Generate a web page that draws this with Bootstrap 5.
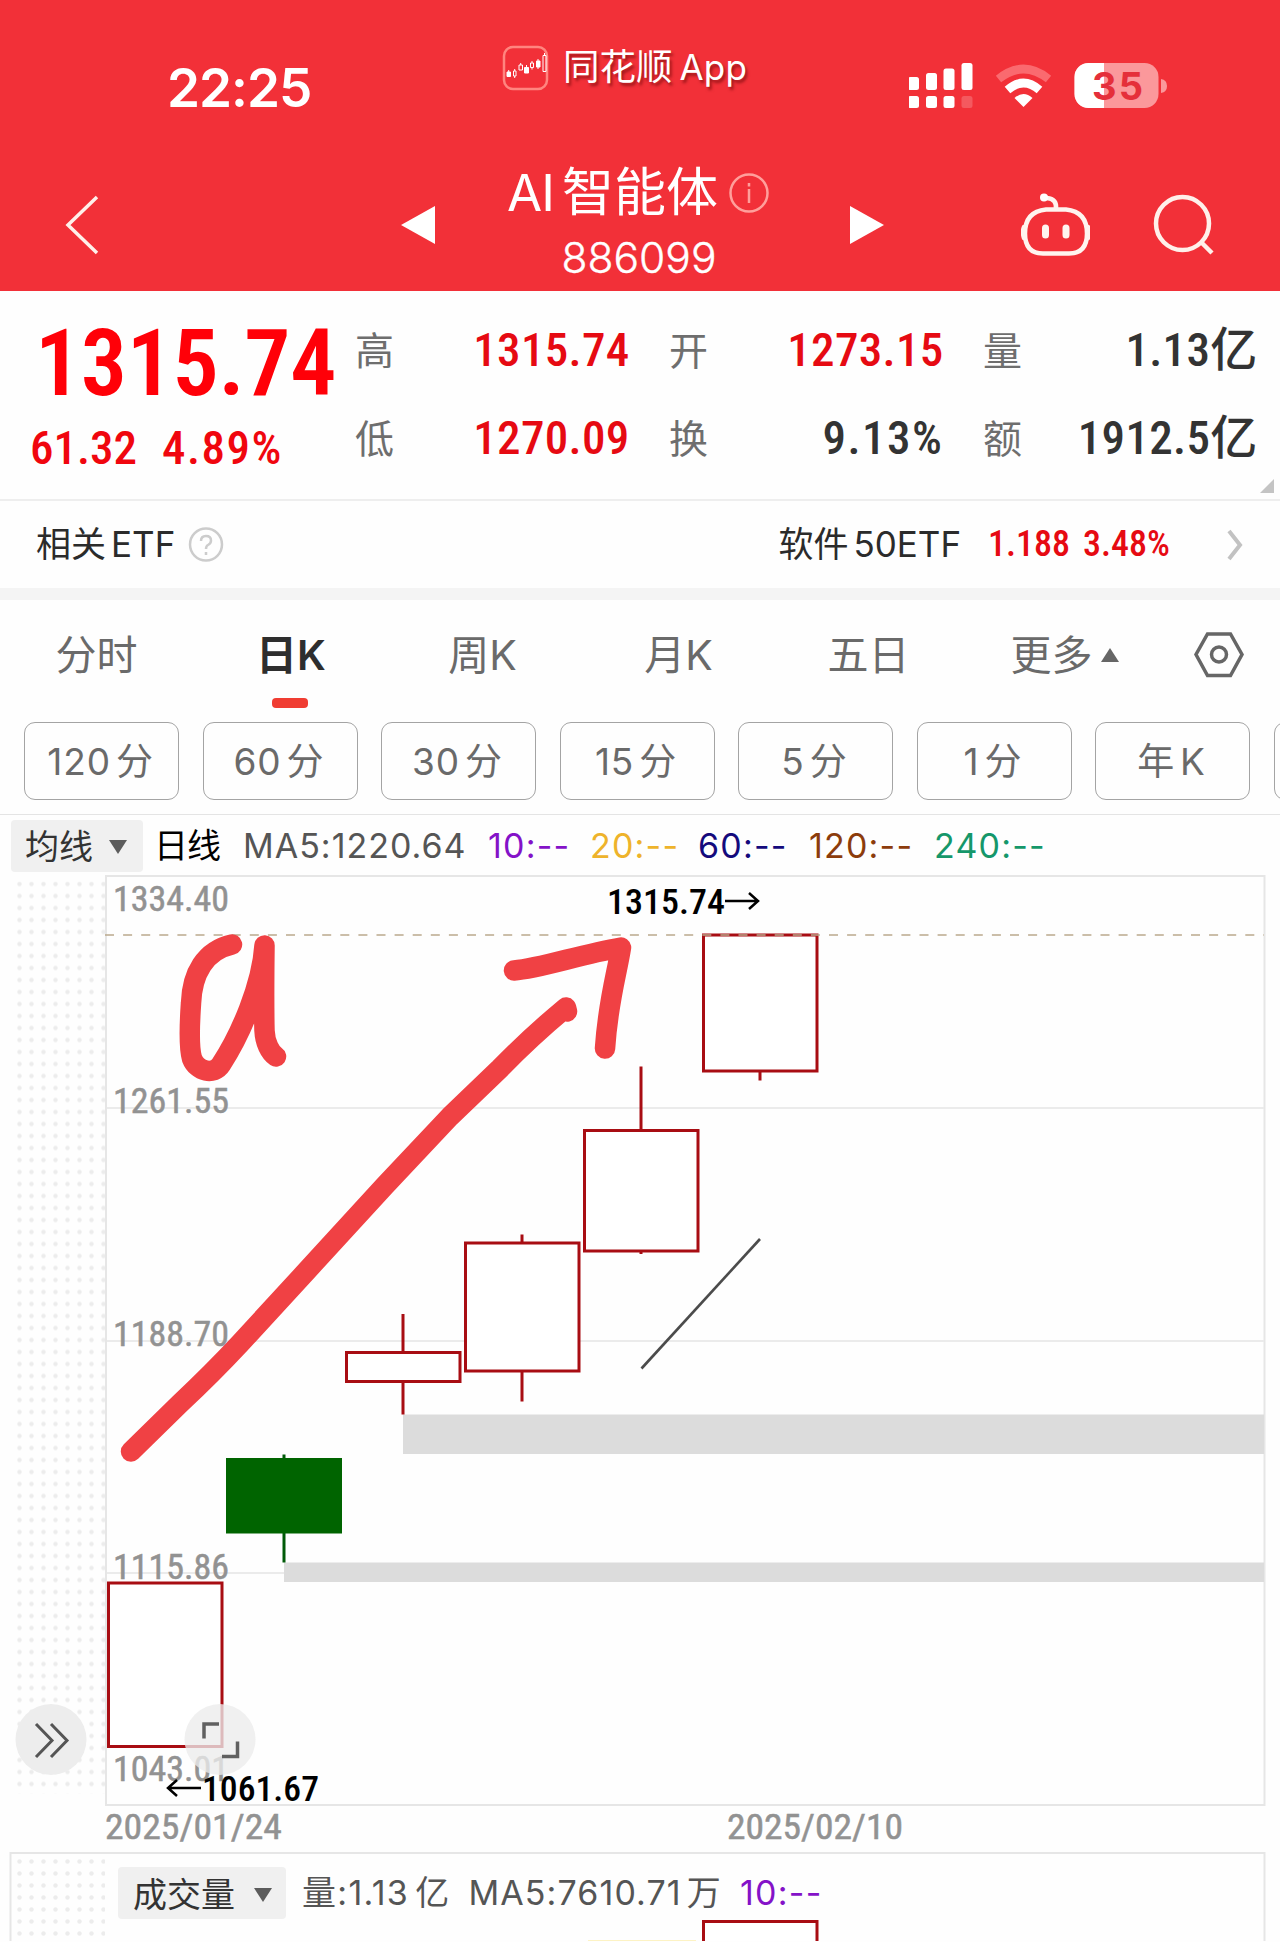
<!DOCTYPE html>
<html lang="zh-CN">
<head>
<meta charset="utf-8">
<meta name="viewport" content="width=device-width, initial-scale=1">
<title>AI智能体 886099</title>
<link href="https://cdn.jsdelivr.net/npm/bootstrap@5.3.0/dist/css/bootstrap.min.css" rel="stylesheet">
<style>
body{width:1280px;height:1942px;overflow:hidden;background:#fefefe;font-family:Inter,"Noto Sans CJK SC",sans-serif;color:#333;line-height:1;white-space:nowrap}
svg{display:block;flex-shrink:0}
.din{font-family:"Roboto Condensed",Roboto,"Noto Sans CJK SC",sans-serif;font-stretch:75%}
.up{color:#e60a12}
.cj{margin-left:5px}
.topbar{height:291px;background:#f23038;color:#fff}
.status-row{height:134px;display:grid;grid-template-columns:500px 409px 1fr}
.clock{font-size:53px;font-weight:600;letter-spacing:-1px;padding:42px 0 0 167px}
.brand{font-size:36.5px;text-shadow:2px 3px 3px rgba(90,0,0,.55);gap:14px;padding-left:2px;padding-top:1px}
.brand .latin{margin-left:7px;font-size:35px;letter-spacing:.2px}
.nav-row{height:157px;padding-top:24px;display:grid;grid-template-columns:401px 34px 415px 34px 137px 69px 1fr}
.title-line{height:68px;font-size:52px;gap:11px;padding-right:9px}
.title-line .latin{font-weight:400;font-size:51px;letter-spacing:-1px;margin-right:8px}
.code-line{height:64px;font-size:42.5px;font-weight:300;padding-right:7px;-webkit-text-stroke:.4px #fff}
.quote{height:210px;border-bottom:2px solid #eee;position:relative}
.price-col{width:355px;padding-left:30px}
.price{font-size:92px;font-weight:600;color:#ff0008;line-height:92px;margin:27px 0 0 5px;letter-spacing:-.4px}
.change{font-size:47px;font-weight:500;line-height:60px;margin-top:8px;color:#f0060e}
.stats{display:grid;grid-template-columns:repeat(3,274.500px);column-gap:39.5px;grid-template-rows:88px 88px;padding-top:14px;height:190px}
.stat-name{font-size:39px;color:#6e6e6e;padding-top:3px}
.stat-value{font-size:47px;font-weight:500;letter-spacing:.3px}
.pct{letter-spacing:1.5px}
.corner{right:6px;bottom:6px}
.etf{height:87px;padding:0 36px 0 36px;font-size:35px;color:#2b2b2b}
.etf-quote{font-size:36px;font-weight:500;padding-bottom:1px}
.band{height:12px;background:#f4f4f4}
.tabs{height:110px;display:grid;grid-template-columns:193px 196px 187px 205px 175px 217px 92px;font-size:41px;color:#6a6a6a}
.tab-on{color:#2e2e2e;font-weight:600}
.tab-on::after{content:"";position:absolute;left:79px;bottom:2px;width:36px;height:10px;border-radius:4px;background:#f03d32}
.periods{height:105px;padding:12px 0 0 24px;gap:23.5px;border-bottom:1px solid #e4e4e4}
.btn-period{width:155px;height:78px;flex-shrink:0;border:1.5px solid #a4a4a4;border-radius:11px;color:#6a6a6a;font-size:37px;padding:0 2px 0 0;line-height:78px;letter-spacing:.9px}
.ma-row{height:58px;padding:3px 0 0 11px;display:grid;grid-template-columns:143px 89px 245px 102px 108px 111px 125px 1fr;font-size:34px;letter-spacing:1.2px}
.chip{background:#f0f0f0;border-radius:4px;height:52px;font-size:34px;color:#333;letter-spacing:0;padding-top:3px}
.chart text{font-family:"Roboto Condensed",Roboto,sans-serif;font-stretch:75%;font-size:35px}
.axis{fill:#929292;font-weight:400}
.peak{fill:#000;font-weight:500}
.candle{fill:#fff;stroke:#a80d13;stroke-width:3}
.wick{stroke:#a80d13;stroke-width:3;fill:none}
.volume{height:92px;position:relative}
.volume-head{position:relative;height:88px;padding-left:118px;font-size:34px;color:#555;letter-spacing:1.3px}
</style>
</head>
<body>
<header class="topbar">
  <div class="status-row">
    <div class="clock d-flex align-items-center">22:25</div>
    <div class="brand d-flex align-items-center">
      <svg width="47" height="46" viewBox="0 0 47 46"><rect x="2" y="2" width="43" height="42" rx="9" fill="none" stroke="#ff857f" stroke-width="2.500"/><g fill="#fff" stroke="#fff" stroke-width="1"><path d="M5 27h3.500v4.500H5zM22.500 22.500h4v5.500h-4zM34.500 16h3.500v6h-3.500z"/><path fill="none" d="M11.500 26h2.500v5h-2.500zM17 20h3.500v5H17zM28.500 18h3v4.500h-3zM41 10.500h3v16h-3zM12.700 24v2M12.700 31v2M18.700 18v2M24.500 20v2M30 16v2M30 22.500v2M36 14v10M42.500 8v2M6.700 25v7"/></g></svg>
      <span>同花顺<span class="latin">App</span></span>
    </div>
    <svg width="270" height="134" viewBox="910 0 270 134">
      <g fill="#fff"><rect x="909" y="77" width="11" height="13" rx="2.500"/><rect x="927" y="73" width="11" height="17" rx="2.500"/><rect x="944.500" y="68.500" width="11" height="21.500" rx="2.500"/><rect x="962.500" y="63" width="11" height="27" rx="2.500"/><rect x="909" y="96" width="11" height="12" rx="2.500"/><rect x="927" y="96" width="11" height="12" rx="2.500"/><rect x="944.500" y="96" width="11" height="12" rx="2.500"/><rect x="962.500" y="96" width="11" height="12" rx="2.500" opacity=".2"/></g>
      <path d="M999.500 79Q1024.500 59 1049.500 79" fill="none" stroke="#fa6a6f" stroke-width="8.500"/>
      <path d="M1008.500 90Q1024.500 76 1040.500 90" fill="none" stroke="#fff" stroke-width="8.500"/>
      <path d="M1015.500 98Q1024.500 90 1033.500 98L1024.500 107Z" fill="#fff"/>
      <rect x="1075.500" y="63" width="84" height="45" rx="14" fill="#fb989b"/>
      <path d="M1105 63h-15.500a14 14 0 0 0-14 14v17a14 14 0 0 0 14 14h15.500z" fill="#fff"/>
      <path d="M1162 79q6 1 6 7t-6 7z" fill="#fb989b"/>
      <text x="1118.500" y="100" text-anchor="middle" font-size="38" font-weight="700" textLength="51" fill="#e52f3a">35</text>
    </svg>
  </div>
  <div class="nav-row align-items-center">
    <svg width="110" height="66" viewBox="0 0 110 66"><path d="M97 5 68 33 97 61" fill="none" stroke="#fff0ea" stroke-width="3.500"/></svg>
    <svg width="34" height="38"><path d="M34 0v38L0 19z" fill="#fff"/></svg>
    <div class="text-center">
      <div class="title-line d-flex align-items-center justify-content-center"><span><span class="latin">AI</span>智能体</span>
        <svg width="40" height="40" viewBox="0 0 40 40" fill="none" stroke="#ff9f9b" stroke-width="2.500"><circle cx="20" cy="20" r="18.500"/><path d="M20 16v14M20 10v3.500"/></svg></div>
      <div class="code-line d-flex align-items-center justify-content-center">886099</div>
    </div>
    <svg width="34" height="38"><path d="M0 0v38l34-19z" fill="#fff"/></svg>
    <span></span>
    <svg width="69" height="66" viewBox="1022 191 69 66" fill="none" stroke="#fff4ef" stroke-width="4.500"><path d="M1047 208.500h20q21 2 21 24 0 20-18 20h-26q-18 0-18-20 0-22 21-24zM1057 208q1-10-9-11" stroke-linecap="round"/><circle cx="1045" cy="196.500" r="4" fill="#fff" stroke="none"/><path d="M1046.500 227v7M1067 227v7" stroke-width="7" stroke-linecap="round"/><path d="M1025 226q-2 5 0 11M1089 226q2 5 0 11" stroke-width="4.500" stroke-linecap="round"/></svg>
    <svg width="130" height="66" viewBox="1091 191 130 66" fill="none" stroke="#fff0ea" stroke-width="4.500"><circle cx="1183.500" cy="222.500" r="26.500"/><path d="m1202 241 11 11"/></svg>
  </div>
</header>

<section class="quote d-flex">
  <div class="price-col din">
    <div class="price">1315.74</div>
    <div class="change d-flex"><span style="width:132px">61.32</span><span class="pct">4.89%</span></div>
  </div>
  <div class="stats">
    <div class="d-flex justify-content-between align-items-center"><span class="stat-name">高</span><span class="stat-value din up">1315.74</span></div>
    <div class="d-flex justify-content-between align-items-center"><span class="stat-name">开</span><span class="stat-value din up">1273.15</span></div>
    <div class="d-flex justify-content-between align-items-center"><span class="stat-name">量</span><span class="stat-value din">1.13亿</span></div>
    <div class="d-flex justify-content-between align-items-center"><span class="stat-name">低</span><span class="stat-value din up">1270.09</span></div>
    <div class="d-flex justify-content-between align-items-center"><span class="stat-name">换</span><span class="stat-value din pct">9.13%</span></div>
    <div class="d-flex justify-content-between align-items-center"><span class="stat-name">额</span><span class="stat-value din">1912.5亿</span></div>
  </div>
  <svg class="corner position-absolute" width="14" height="14"><path d="M14 0v14H0z" fill="#c4c4c4"/></svg>
</section>

<section class="etf d-flex align-items-center">
  <span>相关<span class="cj">ETF</span></span>
  <svg style="margin-left:13px" width="36" height="36" viewBox="0 0 36 36" fill="none" stroke="#ccc" stroke-width="2.500"><circle cx="18" cy="17.500" r="16"/><path d="M13 14q0-5 5-5t5 4.500q0 3-3 4.500-2 1-2 4M18 25v3"/></svg>
  <span class="ms-auto">软件<span class="cj">50ETF</span></span>
  <span class="din up d-flex etf-quote"><span style="margin:0 13px 0 27px">1.188</span><span>3.48%</span></span>
  <svg style="margin-left:57px" width="17" height="32" viewBox="0 0 17 32"><path d="M2 2 13 16 2 30" fill="none" stroke="#c2c2c2" stroke-width="4"/></svg>
</section>
<div class="band"></div>

<nav class="tabs text-center align-items-center">
  <span>分时</span>
  <span class="tab-on position-relative h-100 d-flex align-items-center justify-content-center">日K</span>
  <span>周K</span><span>月K</span><span>五日</span>
  <span class="d-flex align-items-center justify-content-center">更多<svg class="ms-2" width="18" height="14"><path d="M9 0 18 14H0z" fill="#666"/></svg></span>
  <svg class="mx-auto" width="50" height="46" viewBox="0 0 50 46" fill="none" stroke="#666" stroke-width="3.500"><path d="M13.500 2h23L48 22.500 36.500 43.500h-23L2 22.500z"/><circle cx="25" cy="22.500" r="7.500"/></svg>
</nav>

<div class="periods d-flex overflow-hidden">
  <button class="btn btn-period">120<span class="cj">分</span></button>
  <button class="btn btn-period">60<span class="cj">分</span></button>
  <button class="btn btn-period">30<span class="cj">分</span></button>
  <button class="btn btn-period">15<span class="cj">分</span></button>
  <button class="btn btn-period">5<span class="cj">分</span></button>
  <button class="btn btn-period">1<span class="cj">分</span></button>
  <button class="btn btn-period">年<span class="cj">K</span></button>
  <button class="btn btn-period"></button>
</div>

<div class="ma-row align-items-center">
  <div><div class="chip d-flex align-items-center" style="width:132px;padding-left:14px">均线<svg style="margin-left:16px" width="18" height="14"><path d="M0 0h18L9 14z" fill="#5c5c5c"/></svg></div></div>
  <span class="text-black" style="letter-spacing:-1px">日线</span>
  <span style="color:#555;letter-spacing:1px">MA5:1220.64</span>
  <span style="color:#8412c8">10:--</span>
  <span style="color:#eeb32b">20:--</span>
  <span style="color:#140a7c">60:--</span>
  <span style="color:#8c3c0c">120:--</span>
  <span style="color:#15976a">240:--</span>
</div>

<svg class="chart" width="1280" height="976" viewBox="0 873.500 1280 976">
  <defs><pattern id="dots" x="17" y="882" width="12" height="12" patternUnits="userSpaceOnUse"><circle cx="2.500" cy="2.500" r="2.200" fill="#ececec"/></pattern></defs>
  <rect x="17" y="882" width="88" height="912" fill="url(#dots)"/>
  <rect x="106" y="876.500" width="1158.500" height="929" fill="#fefefe" stroke="#e6e6e6" stroke-width="2"/>
  <path d="M107 1108.500H1264M107 1341.500H1264M107 1573.500H1264" stroke="#ebebeb" stroke-width="2"/>
  <g class="axis" stroke="#929292" stroke-width=".5">
    <text x="113" y="911" textLength="116" lengthAdjust="spacingAndGlyphs">1334.40</text>
    <text x="113" y="1113.500" textLength="116" lengthAdjust="spacingAndGlyphs">1261.55</text>
    <text x="113" y="1346.500" textLength="116" lengthAdjust="spacingAndGlyphs">1188.70</text>
    <text x="113" y="1579" textLength="116" lengthAdjust="spacingAndGlyphs">1115.86</text>
    <text x="113" y="1781" textLength="116" lengthAdjust="spacingAndGlyphs">1043.01</text>
    <text x="105" y="1839.500" textLength="177" lengthAdjust="spacingAndGlyphs">2025/01/24</text>
    <text x="727" y="1839.500" textLength="176" lengthAdjust="spacingAndGlyphs">2025/02/10</text>
  </g>
  <path d="M403 1415H1264V1454.500H403zM284 1563H1264V1582.500H284z" fill="#dcdcdc"/>
  <rect class="candle" x="108.500" y="1583.500" width="113.500" height="163.500"/>
  <path d="M284 1455V1563" stroke="#005a08" stroke-width="3"/>
  <rect x="226" y="1458.500" width="116" height="75.500" fill="#006400"/>
  <path class="wick" d="M403 1314.500V1353M403 1382V1415M522 1235V1244M522 1371V1402M641 1067V1131M641 1251V1254.500M760 1071V1081"/>
  <rect class="candle" x="346.500" y="1353" width="113.500" height="29"/>
  <rect class="candle" x="465.500" y="1243.500" width="113.500" height="128"/>
  <rect class="candle" x="584.500" y="1131" width="113.500" height="120.500"/>
  <rect class="candle" x="703.500" y="935.500" width="113.500" height="136"/>
  <path d="M105 935.500H1264" stroke="#b9a88c" stroke-opacity=".75" stroke-width="1.800" stroke-dasharray="9 9.100"/>
  <path d="M641.500 1369 760 1239.500" stroke="#4b4b4b" stroke-width="2.600"/>
  <text class="peak" x="607" y="914" textLength="118" lengthAdjust="spacingAndGlyphs">1315.74</text>
  <path d="M725 901.500H757M749 893.500 758 901.500 749 909.500" fill="none" stroke="#000" stroke-width="2.500"/>
  <g fill="none" stroke="#f04144" stroke-width="20.500" stroke-linecap="round" stroke-linejoin="round">
    <path d="M131 1452 180 1404Q212 1374 240 1344L308 1270 385 1186 450 1117 500 1069Q530 1038 566 1008L567 1012"/>
    <path d="M514 971C540 969 580 955 621 948 617 974 608 1002 605 1049"/>
    <path d="M232 945C205 951 192 974 191 1004 189 1033 189 1049 192 1059 197 1072 214 1076 221 1065 240 1036 262 986 264.500 946 264 987 264 1011 264.500 1031 265 1043 270 1053 276 1057"/>
  </g>
  <circle cx="51" cy="1740" r="35.500" fill="#ededed"/>
  <path d="M36 1724.500 52 1741 36 1757.500M51 1724.500 67 1741 51 1757.500" fill="none" stroke="#555" stroke-width="3"/>
  <circle cx="220" cy="1740" r="35.500" fill="#ececec" fill-opacity=".78"/>
  <path d="M204 1739V1724.500H219M237.500 1742V1757H222" fill="none" stroke="#606060" stroke-width="3.500"/>
  <path d="M201 1788.500H168M177 1780.500 168 1788.500 177 1796.500" fill="none" stroke="#000" stroke-width="2.500"/>
  <text class="peak" x="202" y="1801" textLength="117" lengthAdjust="spacingAndGlyphs">1061.67</text>
</svg>

<section class="volume">
  <svg class="position-absolute top-0 start-0" width="1280" height="92" viewBox="0 1850 1280 92">
    <defs><pattern id="dots2" x="17" y="1860" width="12" height="12" patternUnits="userSpaceOnUse"><circle cx="2.500" cy="2.500" r="2.200" fill="#ececec"/></pattern></defs>
    <rect x="17" y="1860" width="88" height="78" fill="url(#dots2)"/>
    <path d="M10.500 1950V1854H1264.500V1950" fill="none" stroke="#e6e6e6" stroke-width="2"/>
    <path d="M588 1941.500H696" stroke="#fdf3c4" stroke-width="1"/>
    <rect class="candle" x="703.500" y="1922.500" width="113.500" height="60"/>
  </svg>
  <div class="volume-head d-flex align-items-center">
    <div class="chip d-flex align-items-center" style="width:168px;padding-left:15px">成交量<svg style="margin-left:19px" width="18" height="14"><path d="M0 0h18L9 14z" fill="#5c5c5c"/></svg></div>
    <span style="margin-left:16px">量:1.13<span style="margin-left:6px">亿</span></span>
    <span style="margin-left:18px;letter-spacing:1.1px">MA5:7610.71<span style="margin-left:5px">万</span></span>
    <span style="margin-left:18px;color:#8412c8">10:--</span>
  </div>
</section>
<script src="https://cdn.jsdelivr.net/npm/bootstrap@5.3.0/dist/js/bootstrap.bundle.min.js"></script>
</body>
</html>
